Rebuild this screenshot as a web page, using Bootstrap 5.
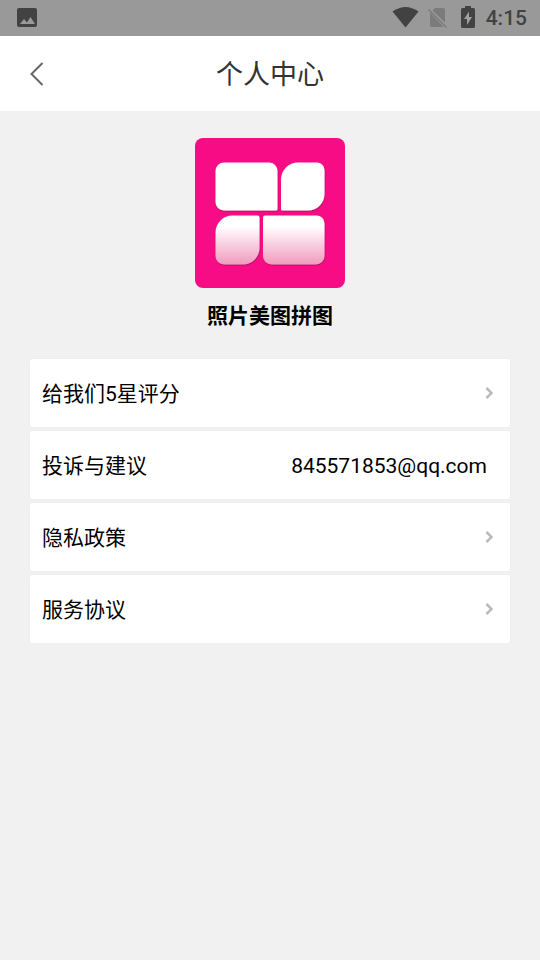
<!DOCTYPE html>
<html lang="zh-CN">
<head>
<meta charset="utf-8">
<meta name="viewport" content="width=device-width, initial-scale=1">
<title>个人中心</title>
<link href="https://cdn.jsdelivr.net/npm/bootstrap@5.3.0/dist/css/bootstrap.min.css" rel="stylesheet">
<style>
  body { background: #f1f1f1; color: #000; font-family: Roboto, "Noto Sans CJK SC", sans-serif; font-size: 21px; line-height: 32px; }
  .status-bar { background: #999; height: 36px; color: #424242; padding: 0 13px 0 16px; }
  .status-time { font-size: 21px; font-weight: 500; line-height: 38px; }
  .title-bar { background: #fff; height: 75px; }
  .title-bar h1 { font-size: 27px; line-height: 40px; color: #333; font-weight: 400; padding-top: 3px; }
  .back-btn { width: 74px; height: 74px; }
  .side-space { width: 74px; }
  .profile { padding-top: 27px; }
  .app-name { font-size: 21px; line-height: 32px; font-weight: 700; margin-top: 12px; }
  .menu { margin: 27px 30px 0; gap: 4px; }
  .menu-row { min-height: 68px; background: #fff; border-radius: 2px; padding: 0 16px 0 12px; color: #000; box-shadow: 0 0 2px rgba(0, 0, 0, .06); text-decoration: none; }
  .menu-row span { padding-top: 1px; }
  .menu-row.contact { padding-right: 23px; }
  .mail { font-size: 21px; }
</style>
</head>
<body>
<div class="status-bar d-flex align-items-center justify-content-between">
  <svg width="22" height="22" viewBox="0 0 22 22" role="img" aria-label="图片">
    <rect x="1" y="1" width="20" height="19" rx="2" fill="#424242"/>
    <path d="M4 17l4-5 3 3.500 3.500-5.500 4.500 7z" fill="#999"/>
  </svg>
  <div class="d-flex align-items-center">
    <svg width="94" height="36" viewBox="392 0 94 36" aria-hidden="true">
      <path d="M392.500 11.500Q405.500 2.500 418.500 11.500L405.500 27.500Z" fill="#424242"/>
      <path d="M435 8H443a2 2 0 0 1 2 2V22.500L432.500 10.500ZM430 12.500L443.500 27H432a2 2 0 0 1-2-2Z" fill="#7b7b7b"/>
      <path d="M428.500 9.500L446.500 27.500" stroke="#7b7b7b" stroke-width="1.500"/>
      <path d="M465 6h6v2h2.500a1.500 1.500 0 0 1 1.500 1.500v17a1.500 1.500 0 0 1-1.500 1.500h-11a1.500 1.500 0 0 1-1.500-1.500v-17a1.500 1.500 0 0 1 1.500-1.500h2.500z" fill="#424242"/>
      <path d="M469 11.500l-5 7.500h3v6l5-8h-3z" fill="#a0a0a0"/>
    </svg>
    <span class="status-time">4:15</span>
  </div>
</div>
<header class="title-bar d-flex align-items-center justify-content-between">
  <button type="button" class="back-btn btn border-0 p-0 d-flex align-items-center justify-content-center" aria-label="返回">
    <svg width="14" height="24" viewBox="0 0 14 24" fill="none" stroke="#666" stroke-width="2" aria-hidden="true"><path d="M12.500 1L1.500 12l11 11"/></svg>
  </button>
  <h1 class="m-0">个人中心</h1>
  <span class="side-space"></span>
</header>
<main>
  <section class="profile text-center">
    <svg class="d-block mx-auto" width="150" height="150" viewBox="0 0 150 150" role="img" aria-label="照片美图拼图">
      <defs>
        <linearGradient id="fade" x1="0" y1="0" x2="0" y2="1">
          <stop offset="0" stop-color="#fff"/><stop offset=".22" stop-color="#fff"/><stop offset="1" stop-color="#f19abd"/>
        </linearGradient>
        <filter id="soft" x="-10%" y="-10%" width="120%" height="120%"><feDropShadow dx="0.500" dy="1" stdDeviation="0.700" flood-color="#7c0044" flood-opacity=".5"/></filter>
      </defs>
      <rect width="150" height="150" rx="8" fill="#f80c86"/>
      <g filter="url(#soft)">
        <path d="M29 24.500H74a8.500 8.500 0 0 1 8.500 8.500V71a1.500 1.500 0 0 1-1.500 1.500H29A8.500 8.500 0 0 1 20.500 64V33A8.500 8.500 0 0 1 29 24.500Z" fill="#fff"/>
        <path d="M103 24.500h19a7.500 7.500 0 0 1 7.500 7.500V56a16.500 16.500 0 0 1-16.500 16.500H87.500A1.500 1.500 0 0 1 86 71V41.500A17 17 0 0 1 103 24.500Z" fill="#fff"/>
        <path d="M37.500 77.500H62.500A2 2 0 0 1 64.500 79.500V110A16.500 16.500 0 0 1 48 126.500H29A8.500 8.500 0 0 1 20.500 118V94.500A17 17 0 0 1 37.500 77.500Z" fill="url(#fade)"/>
        <path d="M70 77.500h51.500a8 8 0 0 1 8 8V118a8.500 8.500 0 0 1-8.500 8.500H76.500A8.500 8.500 0 0 1 68 118V79.500A2 2 0 0 1 70 77.500Z" fill="url(#fade)"/>
      </g>
    </svg>
    <h2 class="app-name mb-0">照片美图拼图</h2>
  </section>
  <nav class="menu d-flex flex-column" aria-label="个人中心">
    <a href="#rate" class="menu-row d-flex align-items-center justify-content-between">
      <span>给我们5星评分</span>
      <svg width="9" height="12" viewBox="0 0 9 12" fill="none" stroke="#bbb" stroke-width="2.500" aria-hidden="true"><path d="M1.500 1L6.500 6l-5 5"/></svg>
    </a>
    <a href="mailto:845571853@qq.com" class="menu-row contact d-flex align-items-center justify-content-between">
      <span>投诉与建议</span>
      <span class="mail">845571853@qq.com</span>
    </a>
    <a href="#privacy" class="menu-row d-flex align-items-center justify-content-between">
      <span>隐私政策</span>
      <svg width="9" height="12" viewBox="0 0 9 12" fill="none" stroke="#bbb" stroke-width="2.500" aria-hidden="true"><path d="M1.500 1L6.500 6l-5 5"/></svg>
    </a>
    <a href="#terms" class="menu-row d-flex align-items-center justify-content-between">
      <span>服务协议</span>
      <svg width="9" height="12" viewBox="0 0 9 12" fill="none" stroke="#bbb" stroke-width="2.500" aria-hidden="true"><path d="M1.500 1L6.500 6l-5 5"/></svg>
    </a>
  </nav>
</main>
<script src="https://cdn.jsdelivr.net/npm/bootstrap@5.3.0/dist/js/bootstrap.bundle.min.js"></script>
</body>
</html>
